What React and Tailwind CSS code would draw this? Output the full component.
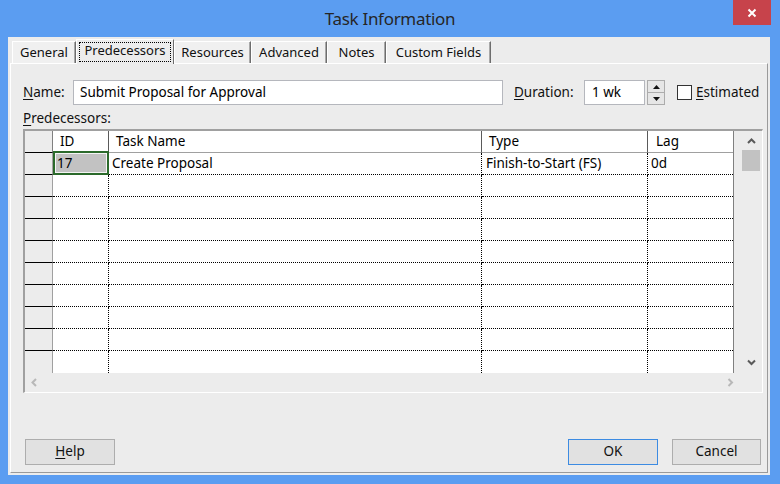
import React from "react";

function Chevron({ dir, color }) {
  const d = {
    up: "M1 5 L4.5 1.5 L8 5",
    down: "M1 1.5 L4.5 5 L8 1.5",
    left: "M5 1 L1.5 4.5 L5 8",
    right: "M1.5 1 L5 4.5 L1.5 8",
  }[dir];
  const vert = dir === "up" || dir === "down";
  return (
    <svg width={vert ? 9 : 7} height={vert ? 7 : 9} viewBox={vert ? "0 0 9 7" : "0 0 7 9"}>
      <path d={d} fill="none" stroke={color} strokeWidth="2" />
    </svg>
  );
}

function Tab({ w, children }) {
  return (
    <div
      className={`h-[22px] ${w} bg-[#f0f0f0] border-t border-l border-white border-r border-r-[#6d6d6d] shadow-[inset_-1px_0_0_#a8a8a8] flex items-center justify-center pt-[1px] text-[13px] text-[#111]`}
    >
      {children}
    </div>
  );
}

export default function App() {
  const rows = Array.from({ length: 10 }, (_, i) => i);
  return (
    <div className="w-[780px] h-[484px] bg-[#5b9df1] flex flex-col font-['Noto_Sans','Open_Sans',sans-serif] text-[13.5px] text-black overflow-hidden">
      {/* Title bar */}
      <div className="h-[37px] relative flex items-center justify-center shrink-0">
        <span className="text-[17px] tracking-[-0.3px] text-[#262626] mt-[1px]">Task Information</span>
        <div className="absolute right-[9px] top-0 w-[38px] h-[25px] bg-[#c7434b] flex items-center justify-center">
          <svg width="10" height="10" viewBox="0 0 10 10">
            <path d="M1.5 1.5 L8.5 8.5 M8.5 1.5 L1.5 8.5" stroke="white" strokeWidth="2" />
          </svg>
        </div>
      </div>

      {/* Client area */}
      <div className="ml-[8px] mr-[10px] h-[438px] bg-[#ececec] flex flex-col">
        {/* Tabs */}
        <div className="h-[26px] flex items-end pl-[4px] shrink-0">
          <Tab w="w-[64px]">General</Tab>
          <div className="relative z-10 -mb-px h-[25px] w-[98px] bg-[#ececec] border-t border-l border-white border-r border-r-[#6d6d6d] p-[2px] flex">
            <div className="flex-1 border border-dotted border-black flex items-center justify-center pb-[2px] text-[13px] text-[#111]">
              Predecessors
            </div>
          </div>
          <Tab w="w-[77px]">Resources</Tab>
          <Tab w="w-[76px]">Advanced</Tab>
          <Tab w="w-[59px]">Notes</Tab>
          <Tab w="w-[105px]">Custom Fields</Tab>
        </div>

        {/* Panel */}
        <div className="mx-[2px] mb-[2px] flex-1 border-t border-l border-white border-r border-b border-r-[#9a9a9a] border-b-[#9a9a9a] flex flex-col pl-[12px] pr-[4px] pt-[16px]">
          {/* Name row */}
          <div className="flex items-center h-[25px]">
            <div className="w-[50px] text-[#111]">
              <span className="underline underline-offset-2">N</span>ame:
            </div>
            <div className="w-[430px] h-[25px] bg-white border border-[#b5b7bd] flex items-center pl-[6px] pb-[1px]">
              Submit Proposal for Approval
            </div>
            <div className="ml-[11px] w-[70px] text-[#111]">
              <span className="underline underline-offset-2">D</span>uration:
            </div>
            <div className="w-[61px] h-[25px] bg-white border border-[#b5b7bd] flex items-center pl-[7px] pb-[1px]">
              1 wk
            </div>
            <div className="ml-[2px] w-[18px] h-[25px] flex flex-col">
              <div className="flex-1 bg-[#e6e6e6] border border-[#acacac] flex items-center justify-center">
                <svg width="7" height="4" viewBox="0 0 7 4"><path d="M0 4 L3.5 0 L7 4 Z" fill="#111" /></svg>
              </div>
              <div className="flex-1 bg-[#e6e6e6] border border-t-0 border-[#acacac] flex items-center justify-center">
                <svg width="7" height="4" viewBox="0 0 7 4"><path d="M0 0 L3.5 4 L7 0 Z" fill="#111" /></svg>
              </div>
            </div>
            <div className="ml-[12px] w-[15px] h-[15px] bg-white border border-[#333]" />
            <div className="ml-[4px] text-[#111]">
              <span className="underline underline-offset-2">E</span>stimated
            </div>
          </div>

          {/* Predecessors label */}
          <div className="mt-[5px] h-[16px] leading-[16px] text-[#111]">
            <span className="underline underline-offset-2">P</span>redecessors:
          </div>

          {/* Grid */}
          <div className="mt-[3px] w-[740px] h-[264px] border-t-2 border-l-2 border-[#a0a0a0] border-r border-b border-r-white border-b-white bg-[#ececec] flex flex-col">
            <div className="flex h-[242px]">
              <div className="w-[709px] flex flex-col border-r border-[#808080]">
                {/* header */}
                <div className="flex h-[22px] shrink-0">
                  <div className="w-[28px] bg-[#ececec] border-r border-r-[#808080] border-b border-b-black" />
                  <div className="w-[56px] bg-white border-r border-r-[#5a5a5a] border-b border-b-[#a0a0a0] pl-[7px] flex items-center">ID</div>
                  <div className="w-[373px] bg-white border-r border-r-[#5a5a5a] border-b border-b-[#a0a0a0] pl-[7px] flex items-center">Task Name</div>
                  <div className="w-[166px] bg-white border-r border-r-[#5a5a5a] border-b border-b-[#a0a0a0] pl-[7px] flex items-center">Type</div>
                  <div className="w-[85px] bg-white border-b border-b-[#a0a0a0] pl-[8px] flex items-center">Lag</div>
                </div>
                {rows.map((i) => {
                  const last = i === rows.length - 1;
                  return (
                    <div key={i} className="flex h-[22px] shrink-0">
                      <div className={`w-[28px] bg-[#ececec] border-r border-r-[#a0a0a0] ${last ? "" : "border-b border-b-black"}`} />
                      <div className={`relative w-[56px] bg-white border-r ${last ? "" : "border-b"} border-dotted border-black`}>
                        {i === 0 && (
                          <div className="absolute left-0 right-[-1px] top-[-2px] bottom-[-1px] border-2 border-[#2b6a2b] z-10">
                            <div className="w-full h-full border border-[#f4f4f4] bg-[#c2c2c2] flex items-center pl-[1px]">17</div>
                          </div>
                        )}
                      </div>
                      <div className={`w-[373px] bg-white border-r ${last ? "" : "border-b"} border-dotted border-black pl-[3px] flex items-center`}>
                        {i === 0 ? "Create Proposal" : ""}
                      </div>
                      <div className={`w-[166px] bg-white border-r ${last ? "" : "border-b"} border-dotted border-black pl-[4px] flex items-center`}>
                        {i === 0 ? "Finish-to-Start (FS)" : ""}
                      </div>
                      <div className={`w-[85px] bg-white ${last ? "" : "border-b"} border-dotted border-black pl-[3px] flex items-center`}>
                        {i === 0 ? "0d" : ""}
                      </div>
                    </div>
                  );
                })}
              </div>
              {/* vertical scrollbar */}
              <div className="w-[28px] flex flex-col pt-[2px] pb-[2px]">
                <div className="h-[17px] ml-[8px] w-[18px] flex items-center justify-center">
                  <Chevron dir="up" color="#5a5a5a" />
                </div>
                <div className="ml-[8px] w-[18px] h-[21px] bg-[#c2c2c2]" />
                <div className="flex-1" />
                <div className="h-[17px] ml-[8px] w-[18px] flex items-center justify-center">
                  <Chevron dir="down" color="#5a5a5a" />
                </div>
              </div>
            </div>
            {/* horizontal scrollbar */}
            <div className="h-[19px] flex items-center pr-[23px]">
              <div className="w-[18px] h-[19px] flex items-center justify-center">
                <Chevron dir="left" color="#b8b8b8" />
              </div>
              <div className="flex-1" />
              <div className="w-[18px] h-[19px] flex items-center justify-center">
                <Chevron dir="right" color="#b8b8b8" />
              </div>
            </div>
          </div>

          {/* Buttons */}
          <div className="mt-[46px] flex pl-[2px] pr-[2px]">
            <div className="w-[90px] h-[26px] bg-[#e1e1e1] border border-[#adadad] flex items-center justify-center pb-[1px] text-[#111]">
              <span><span className="underline underline-offset-2">H</span>elp</span>
            </div>
            <div className="ml-auto w-[90px] h-[26px] bg-[#e1e1e1] border border-[#3c8be2] flex items-center justify-center pb-[1px] text-[#111]">
              OK
            </div>
            <div className="ml-[14px] w-[89px] h-[26px] bg-[#e1e1e1] border border-[#adadad] flex items-center justify-center pb-[1px] text-[#111]">
              Cancel
            </div>
          </div>
        </div>
      </div>
    </div>
  );
}
